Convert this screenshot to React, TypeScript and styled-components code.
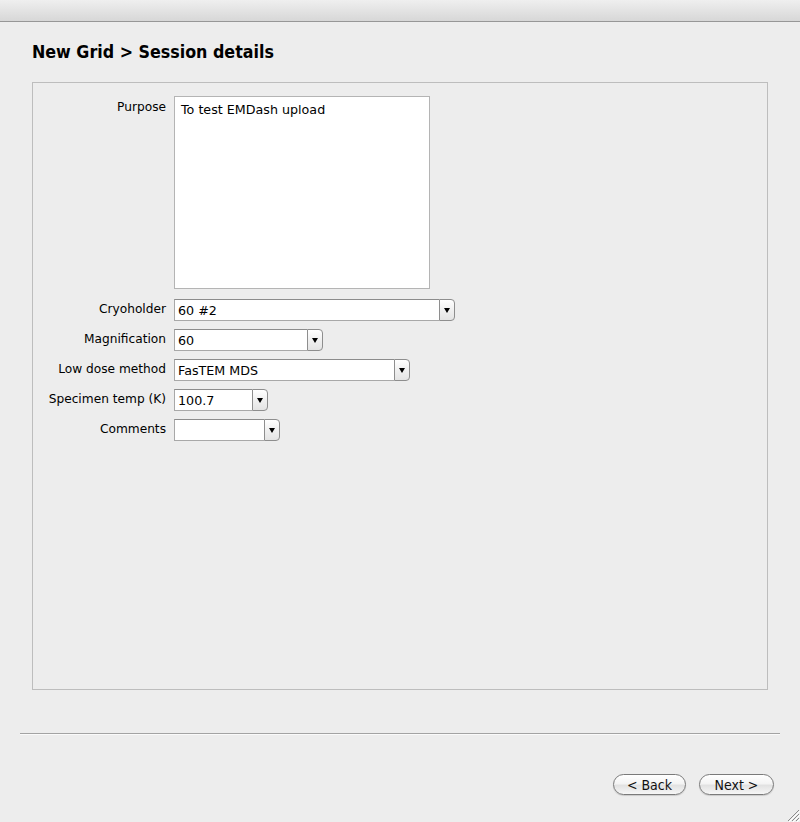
import React from "react";
import styled, { createGlobalStyle } from "styled-components";

const Global = createGlobalStyle`
  html, body { margin: 0; padding: 0; background: #ededed; }
  * { box-sizing: border-box; }
`;

const Window = styled.div`
  width: 800px;
  height: 822px;
  background: #ededed;
  display: flex;
  flex-direction: column;
  position: relative;
  font-family: "DejaVu Sans", "Liberation Sans", sans-serif;
  color: #000;
  overflow: hidden;
`;

const TitleBar = styled.div`
  height: 22px;
  flex: none;
  background: linear-gradient(#efefef, #d7d7d7);
  border-bottom: 1px solid #979797;
`;

const Heading = styled.h1`
  margin: 20px 0 0 32px;
  height: 40px;
  font-family: "DejaVu Sans Condensed", "DejaVu Sans", sans-serif;
  font-stretch: condensed;
  font-weight: bold;
  font-size: 17.7px;
  line-height: 20px;
`;

const Panel = styled.div`
  margin: 0 32px;
  height: 608px;
  flex: none;
  border: 1px solid #bdbdbd;
  padding: 13px 0 0 0;
`;

const Form = styled.div`
  display: grid;
  grid-template-columns: 133px auto;
  column-gap: 8px;
  row-gap: 8px;
  justify-items: start;
`;

const Label = styled.div<{ $top?: boolean }>`
  justify-self: end;
  align-self: ${(p) => (p.$top ? "start" : "center")};
  font-size: 12.2px;
  line-height: 14px;
  padding-top: ${(p) => (p.$top ? "4px" : "0")};
  margin-top: ${(p) => (p.$top ? "0" : "-2px")};
  white-space: nowrap;
`;

const TextArea = styled.div`
  width: 256px;
  height: 193px;
  background: #fff;
  border: 1px solid #b4b4b4;
  padding: 5px 6px;
  font-size: 12.7px;
  line-height: 16px;
  margin-bottom: 2px;
`;

const Combo = styled.div<{ $w: number }>`
  width: ${(p) => p.$w}px;
  height: 22px;
  display: flex;
`;

const ComboField = styled.div`
  flex: 1;
  background: #fff;
  border: 1px solid #a8a8a8;
  border-top-color: #8c8c8c;
  border-right: none;
  font-size: 12.7px;
  line-height: 21px;
  padding-left: 3px;
  white-space: nowrap;
  overflow: hidden;
`;

const ComboButton = styled.div`
  width: 16px;
  flex: none;
  border: 1px solid #8e8e8e;
  border-radius: 0 4px 4px 0;
  background: linear-gradient(#ffffff, #f0f0f0 50%, #e4e4e4);
  display: flex;
  align-items: center;
  justify-content: center;
  &::after {
    content: "";
    display: block;
    border-left: 3.5px solid transparent;
    border-right: 3.5px solid transparent;
    border-top: 5px solid #000;
    margin-top: 1px;
  }
`;

const Separator = styled.div`
  margin: 43px 20px 0 20px;
  height: 2px;
  border-top: 1px solid #a3a3a3;
  border-bottom: 1px solid #fafafa;
  flex: none;
`;

const ButtonRow = styled.div`
  display: flex;
  justify-content: flex-end;
  gap: 13px;
  margin: 39px 26px 0 0;
`;

const Button = styled.button<{ $w: number }>`
  width: ${(p) => p.$w}px;
  height: 21px;
  border: 1px solid #7a7a7a;
  border-radius: 11px;
  background: linear-gradient(#ffffff, #f4f4f4 45%, #e2e2e2 55%, #f6f6f6);
  box-shadow: 0 1px 1px rgba(0, 0, 0, 0.15);
  font-family: "DejaVu Sans Condensed", "DejaVu Sans", sans-serif;
  font-stretch: condensed;
  font-size: 14px;
  line-height: 18px;
  padding: 0;
  color: #111;
`;

const Grip = styled.svg`
  position: absolute;
  right: 0;
  bottom: 0;
`;

const fields = [
  { label: "Cryoholder", value: "60 #2", w: 281 },
  { label: "Magnification", value: "60", w: 149 },
  { label: "Low dose method", value: "FasTEM MDS", w: 236 },
  { label: "Specimen temp (K)", value: "100.7", w: 94 },
  { label: "Comments", value: "", w: 106 },
];

export default function App() {
  return (
    <Window>
      <Global />
      <TitleBar />
      <Heading>New Grid &gt; Session details</Heading>
      <Panel>
        <Form>
          <Label $top>Purpose</Label>
          <TextArea>To test EMDash upload</TextArea>
          {fields.map((f) => (
            <React.Fragment key={f.label}>
              <Label>{f.label}</Label>
              <Combo $w={f.w}>
                <ComboField>{f.value}</ComboField>
                <ComboButton />
              </Combo>
            </React.Fragment>
          ))}
        </Form>
      </Panel>
      <Separator />
      <ButtonRow>
        <Button $w={73}>&lt; Back</Button>
        <Button $w={75}>Next &gt;</Button>
      </ButtonRow>
      <Grip width="16" height="16" viewBox="0 0 16 16">
        <g stroke="#8a8a8a" strokeWidth="1">
          <line x1="15" y1="4" x2="4" y2="15" />
          <line x1="15" y1="8" x2="8" y2="15" />
          <line x1="15" y1="12" x2="12" y2="15" />
        </g>
        <g stroke="#ffffff" strokeWidth="1">
          <line x1="16" y1="5" x2="5" y2="16" />
          <line x1="16" y1="9" x2="9" y2="16" />
          <line x1="16" y1="13" x2="13" y2="16" />
        </g>
      </Grip>
    </Window>
  );
}
